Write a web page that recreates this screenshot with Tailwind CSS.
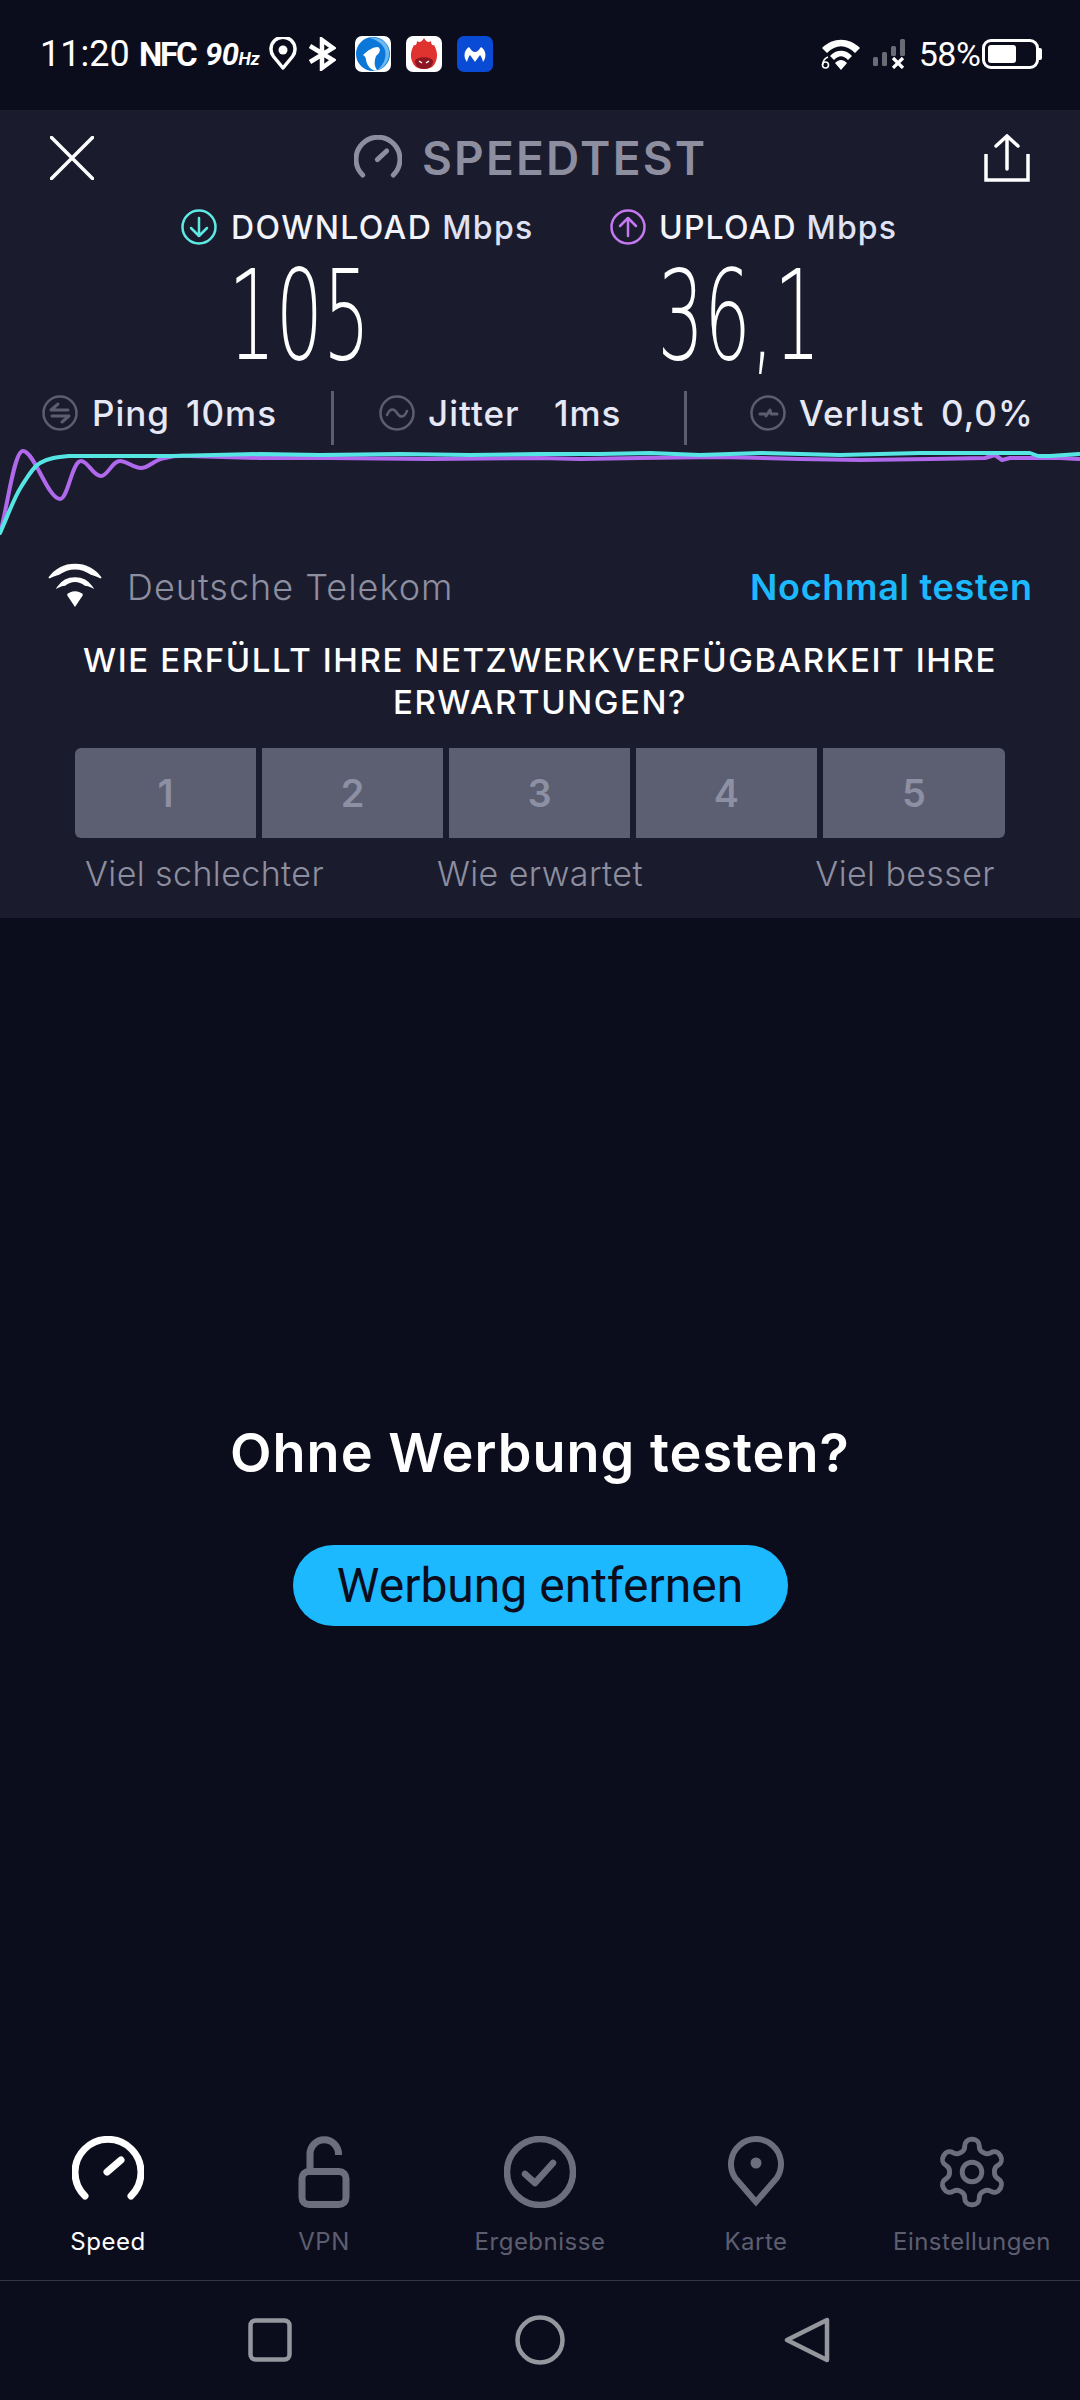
<!DOCTYPE html>
<html lang="en">
<head>
    <meta charset="UTF-8">
    <meta name="viewport" content="width=device-width, initial-scale=1.0">
    <title>Speedtest</title>
    <script src="https://cdn.jsdelivr.net/npm/@tailwindcss/browser@4"></script>
</head>
<body class="bg-[#0c0d1c] font-['Inter',sans-serif]">
<div class="w-[1080px] h-[2400px] flex flex-col overflow-hidden">

    <!-- status bar -->
    <div class="h-[110px] shrink-0 bg-[#0c0d1c] flex items-center text-white font-['Roboto',sans-serif] pb-[2px]">
        <span class="ml-[40px] w-[90px] text-[36px] leading-none">11:20</span>
        <span class="ml-[9px] w-[56px] text-[33px] font-bold leading-none tracking-[-2.2px]">NFC</span>
        <span class="ml-[10px] text-[31px] font-bold italic leading-none tracking-[-.5px]">90</span>
        <span class="text-[18px] font-bold italic leading-none mt-[10px]">Hz</span>
        <svg class="ml-[9px] w-[28px] h-[34px]" viewBox="0 0 28 34" fill="none"><path d="M14 31 L4.5 19.5 A12 12 0 1 1 23.5 19.5 Z" stroke="#fff" stroke-width="3.5" stroke-linejoin="round"/><circle cx="14" cy="13" r="4.5" fill="#fff"/></svg>
        <svg class="ml-[11px] w-[28px] h-[34px]" viewBox="0 0 28 34" fill="none"><path d="M2 9 L25 23 L14 31 V3 L25 11 L2 25" stroke="#fff" stroke-width="4.5" stroke-linejoin="miter"/></svg>
        <svg class="ml-[19px] w-[36px] h-[36px]" viewBox="0 0 36 36"><rect width="36" height="36" rx="7" fill="#fff"/><circle cx="18" cy="18" r="17" fill="#0b77d8"/><path d="M14 2 C22 0 33 5 34 15 C35 24 30 32 21 35 C28 30 32 22 30 14 C28 8 21 3 14 2Z" fill="#6db8ef"/><path d="M8 19 C13 14 18 11 23 11 C27 13 24 18 21 20 C19 26 19 31 23 35 C16 35 12 30 11 24 C11 22 10 20 8 19Z" fill="#fff"/></svg>
        <svg class="ml-[15px] w-[36px] h-[36px]" viewBox="0 0 36 36"><rect width="36" height="36" rx="7" fill="#fff"/><path d="M18 2 C20 6 23 7 25 5 C25 9 27 10 28 9 C31 14 32 20 30 25 C28 31 24 33 18 33 C12 33 8 31 6 25 C4 20 5 14 8 9 C9 10 11 9 11 5 C13 7 16 6 18 2Z" fill="#e0322f"/><path d="M9 25 C11 20 25 20 27 25 C27 30 23 33 18 33 C13 33 9 30 9 25Z" fill="#8c1622"/><path d="M13 25 L16 27 M23 25 L20 27" stroke="#fff" stroke-width="1.5"/></svg>
        <svg class="ml-[15px] w-[36px] h-[36px]" viewBox="0 0 36 36"><rect width="36" height="36" rx="7" fill="#0a4bd6"/><path d="M10 26 C6 21 7 14 12 11 C14 14 16 16 18 16 C20 16 22 14 24 11 C29 14 30 21 26 26 C25 22 24 20 23 19 C21 22 19 24 18 26 C17 24 15 22 13 19 C12 20 11 22 10 26Z" fill="#fff"/></svg>

        <svg class="ml-[328px] w-[40px] h-[32px]" viewBox="0 0 40 32" fill="none"><path d="M1 10 C12 -1 28 -1 39 10 L34 15 C25 6 15 6 6 15Z M9 18 C15 11 25 11 31 18 L27 22 C22 17 18 17 13 22Z" fill="#fff"/><path d="M20 32 L14 25 C18 21 22 21 26 25Z" fill="#fff"/><circle cx="4.5" cy="27" r="3" stroke="#fff" stroke-width="1.6"/><path d="M7 19 C4 20 2 23 1.5 27" stroke="#fff" stroke-width="1.6"/></svg>
        <svg class="ml-[12px] w-[32px] h-[30px]" viewBox="0 0 32 30"><rect x="0" y="18" width="5" height="9" rx="1.5" fill="#6a6b76"/><rect x="9" y="13" width="5" height="14" rx="1.5" fill="#6a6b76"/><rect x="18" y="7" width="5" height="10" rx="1.5" fill="#6a6b76"/><rect x="27" y="0" width="5" height="17" rx="1.5" fill="#6a6b76"/><path d="M20 19 L30 29 M30 19 L20 29" stroke="#fff" stroke-width="3.2"/></svg>
        <span class="ml-[14px] w-[60px] text-[34px] leading-none tracking-[-.5px]">58%</span>
        <div class="ml-[3px] w-[57px] h-[30px] rounded-[9px] border-[3px] border-white p-[3px]">
            <div class="w-[28px] h-[18px] bg-white rounded-[3px]"></div>
        </div>
        <div class="w-[3px] h-[12px] bg-white rounded-r-[2px]"></div>
    </div>

    <!-- result panel -->
    <div class="h-[808px] shrink-0 bg-[#1a1c2e] flex flex-col">
        <div class="h-[96px] shrink-0 flex items-center">
            <svg class="ml-[50px] w-[44px] h-[44px]" viewBox="0 0 44 44" fill="none" stroke="#fff" stroke-width="3.5" stroke-linecap="round"><path d="M1.5 1.5 L42.5 42.5 M42.5 1.5 L1.5 42.5"/></svg>
            <svg class="ml-[260px] w-[48px] h-[48px] mt-[2px]" viewBox="0 0 72 72" fill="none" stroke="#8d8e9f" stroke-width="7.5" stroke-linecap="round"><path d="M13 60 A33 33 0 1 1 59 60"/><path d="M35 37 L49 24"/></svg>
            <span class="ml-[20px] w-[290px] text-[46px] font-semibold text-[#8d8e9f] leading-none tracking-[2.2px]">SPEEDTEST</span>
            <svg class="ml-[272px] w-[46px] h-[48px]" viewBox="0 0 46 48" fill="none" stroke="#fff" stroke-width="3.5"><path d="M2 20 V46 H44 V20"/><path d="M23 35 V2 M12 12 L23 2 L34 12" stroke-linecap="round"/></svg>
        </div>

        <div class="h-[38px] shrink-0 flex items-center pt-[6px]">
            <svg class="ml-[181px] w-[36px] h-[36px] mt-[-3px]" viewBox="0 0 36 36" fill="none" stroke="#5fe9e3" stroke-width="2.5" stroke-linecap="round" stroke-linejoin="round"><circle cx="18" cy="18" r="16.5"/><path d="M18 9 V27 M10 19 L18 27 L26 19"/></svg>
            <span class="ml-[14px] w-[305px] text-[32px] font-medium text-[#f2f3fb] leading-none whitespace-nowrap tracking-[1.4px]">DOWNLOAD <span class="text-[#dfe2f5]">Mbps</span></span>
            <svg class="ml-[74px] w-[36px] h-[36px] mt-[-3px]" viewBox="0 0 36 36" fill="none" stroke="#c678f0" stroke-width="2.5" stroke-linecap="round" stroke-linejoin="round"><circle cx="18" cy="18" r="16.5"/><path d="M18 27 V9 M10 17 L18 9 L26 17"/></svg>
            <span class="ml-[13px] text-[32px] font-medium text-[#f2f3fb] leading-none whitespace-nowrap tracking-[1.2px]">UPLOAD <span class="text-[#dfe2f5]">Mbps</span></span>
        </div>

        <div class="h-[147px] shrink-0 flex text-white font-['DejaVu_Sans',sans-serif] font-extralight text-[124px] leading-[144px]">
            <div class="w-[598px] flex justify-center"><span class="inline-block scale-x-[.6]">105</span></div>
            <div class="w-[282px] flex justify-center"><span class="inline-block scale-x-[.59]">36,1</span></div>
        </div>

        <div class="h-[54px] shrink-0 flex items-center pb-[10px] text-[35px] font-medium text-[#e6e8f6] leading-none whitespace-nowrap tracking-[1px]">
            <svg class="ml-[42px] w-[36px] h-[36px]" viewBox="0 0 36 36" fill="none" stroke="#5c5e70" stroke-width="2.5" stroke-linecap="round"><circle cx="18" cy="18" r="16.5"/><path d="M9 15 H26 M9 15 L16 9 M27 21 H10 M27 21 L20 27" stroke-width="3"/></svg>
            <span class="ml-[14px] w-[94px]">Ping</span>
            <span class="w-[145px]">10ms</span>
            <div class="w-[3px] h-[54px] self-start bg-[#5c5e70]"></div>
            <svg class="ml-[45px] w-[36px] h-[36px]" viewBox="0 0 36 36" fill="none" stroke="#5c5e70" stroke-width="2.5" stroke-linecap="round"><circle cx="18" cy="18" r="16.5"/><path d="M8 20 C11 13 15 13 18 18 C21 23 25 23 28 16"/></svg>
            <span class="ml-[13px] w-[126px]">Jitter</span>
            <span class="w-[130px]">1ms</span>
            <div class="w-[3px] h-[54px] self-start bg-[#5c5e70]"></div>
            <svg class="ml-[63px] w-[36px] h-[36px]" viewBox="0 0 36 36" fill="none" stroke="#5c5e70" stroke-width="2.5" stroke-linecap="round" stroke-linejoin="round"><circle cx="18" cy="18" r="16.5"/><path d="M10 19 H15 M16 21 L20 15 L21 19 H27" stroke-width="3"/></svg>
            <span class="ml-[13px] w-[142px]">Verlust</span>
            <span>0,0%</span>
        </div>

        <svg class="w-[1080px] h-[100px] shrink-0" viewBox="0 445 1080 100" fill="none" stroke-width="4" stroke-linejoin="round" stroke-linecap="round">
            <path stroke="#b069ec" d="M0 533 C8 505 14 451 23 451 C34 451 48 499 60 499 C68 499 72 461 81 461 C88 461 93 476 101 476 C108 476 112 461 120 461 C127 461 133 468 141 468 C149 468 155 459 165 458 C172 456 178 455 190 456 L260 458 L330 458 L430 459 L540 458 L580 459 L640 458 L720 457 L800 459 L860 460 L930 459 L985 458 L995 455 L1002 460 L1010 458 L1060 458 L1079 459"/>
            <path stroke="#55e6e4" d="M0 533 C8 515 14 498 21 487 C28 476 33 467 40 463 C48 458 58 457 69 456 L172 456 L260 454 L320 455 L400 454 L470 455 L540 454 L600 454 L650 453 L700 455 L760 453 L840 455 L920 453 L1030 453 L1038 456 L1050 456 L1079 454"/>
        </svg>

        <div class="h-[83px] shrink-0 flex items-center">
            <svg class="ml-[48px] w-[54px] h-[44px] mb-[3px]" viewBox="0 0 54 44" fill="none"><path d="M1 15 C14 -3 40 -3 53 15 C50 13 46 12 43 11 C33 4 21 4 11 11 C8 12 4 13 1 15Z M10 24 C18 12 36 12 44 24 C42 23 39 22 37 22 C31 17 23 17 17 22 C15 22 12 23 10 24Z" fill="#fff" stroke="#fff" stroke-width="1.5"/><path d="M27 44 L19 32 C22 27 32 27 35 32Z" fill="#fff"/></svg>
            <span class="ml-[25px] w-[623px] text-[36px] font-light text-[#8d8e9f] leading-none tracking-[1px] whitespace-nowrap">Deutsche Telekom</span>
            <span class="text-[36px] font-semibold text-[#1cb9ff] leading-none whitespace-nowrap tracking-[.7px]">Nochmal testen</span>
        </div>

        <p class="h-[84px] shrink-0 text-center text-[33px] font-medium text-white leading-[42px] mt-[11px] tracking-[1.6px] whitespace-nowrap">WIE ERFÜLLT IHRE NETZWERKVERFÜGBARKEIT IHRE<br>ERWARTUNGEN?</p>

        <div class="mt-[25px] h-[90px] shrink-0 ml-[75px] w-[930px] flex gap-[6px] text-[38px] font-semibold text-[#8d8fa3]">
            <div class="w-[181px] bg-[#5c5e72] rounded-l-[6px] flex items-center justify-center">1</div>
            <div class="w-[181px] bg-[#5c5e72] flex items-center justify-center">2</div>
            <div class="w-[181px] bg-[#5c5e72] flex items-center justify-center">3</div>
            <div class="w-[181px] bg-[#5c5e72] flex items-center justify-center">4</div>
            <div class="w-[182px] bg-[#5c5e72] rounded-r-[6px] flex items-center justify-center">5</div>
        </div>

        <div class="h-[71px] shrink-0 px-[85px] grid grid-cols-3 items-center text-[34px] font-light text-[#8d8e9f] whitespace-nowrap tracking-[.4px]">
            <span>Viel schlechter</span>
            <span class="text-center">Wie erwartet</span>
            <span class="text-right">Viel besser</span>
        </div>
    </div>

    <!-- remove ads -->
    <div class="flex-1 flex flex-col items-center">
        <h2 class="mt-[500px] text-[54px] leading-[70px] font-semibold text-white whitespace-nowrap tracking-[1px]">Ohne Werbung testen?</h2>
        <div class="mt-[57px] w-[495px] h-[81px] rounded-full bg-[#1cb9ff] flex items-center justify-center font-['Roboto',sans-serif] text-[48px] text-[#0c0d1c] leading-none">Werbung entfernen</div>
    </div>

    <!-- tabs -->
    <div class="h-[144px] shrink-0 grid grid-cols-5 items-start text-[24px] text-[#5c5e70] text-center leading-none whitespace-nowrap tracking-[.5px]">
        <div class="flex flex-col items-center text-white">
            <svg class="w-[72px] h-[72px]" viewBox="0 0 72 72" fill="none" stroke="#fff" stroke-width="7" stroke-linecap="round"><path d="M13 60 A33 33 0 1 1 59 60"/><path d="M35 36 L49 24"/></svg>
            <span class="mt-[22px]">Speed</span>
        </div>
        <div class="flex flex-col items-center">
            <svg class="w-[72px] h-[72px]" viewBox="0 0 72 72" fill="none" stroke="#6c6e7e" stroke-width="7"><rect x="14" y="35.5" width="44" height="33" rx="7"/><path d="M22 34 V18 A14.25 14.25 0 0 1 50.5 18 V19"/></svg>
            <span class="mt-[22px]">VPN</span>
        </div>
        <div class="flex flex-col items-center">
            <svg class="w-[72px] h-[72px]" viewBox="0 0 72 72" fill="none" stroke="#6c6e7e" stroke-width="6.5" stroke-linecap="round" stroke-linejoin="round"><circle cx="36" cy="36" r="33"/><path d="M21 38 L31 47 L49 27"/></svg>
            <span class="mt-[22px]">Ergebnisse</span>
        </div>
        <div class="flex flex-col items-center">
            <svg class="w-[72px] h-[72px]" viewBox="0 0 72 72" fill="none" stroke="#6c6e7e" stroke-width="6"><path d="M36 66 L15 41.6 A25 25 0 1 1 57 41.6 Z"/><circle cx="36" cy="27" r="5.5" fill="#6c6e7e" stroke="none"/></svg>
            <span class="mt-[22px]">Karte</span>
        </div>
        <div class="flex flex-col items-center">
            <svg class="w-[72px] h-[72px]" viewBox="1 1 22 22" fill="none" stroke="#6c6e7e" stroke-width="1.5" stroke-linecap="round" stroke-linejoin="round"><path d="M12.22 2h-.44a2 2 0 0 0-2 2v.18a2 2 0 0 1-1 1.73l-.43.25a2 2 0 0 1-2 0l-.15-.08a2 2 0 0 0-2.73.73l-.22.38a2 2 0 0 0 .73 2.73l.15.1a2 2 0 0 1 1 1.72v.51a2 2 0 0 1-1 1.74l-.15.09a2 2 0 0 0-.73 2.73l.22.38a2 2 0 0 0 2.73.73l.15-.08a2 2 0 0 1 2 0l.43.25a2 2 0 0 1 1 1.73V20a2 2 0 0 0 2 2h.44a2 2 0 0 0 2-2v-.18a2 2 0 0 1 1-1.73l.43-.25a2 2 0 0 1 2 0l.15.08a2 2 0 0 0 2.73-.73l.22-.39a2 2 0 0 0-.73-2.73l-.15-.08a2 2 0 0 1-1-1.74v-.5a2 2 0 0 1 1-1.74l.15-.09a2 2 0 0 0 .73-2.73l-.22-.38a2 2 0 0 0-2.73-.73l-.15.08a2 2 0 0 1-2 0l-.43-.25a2 2 0 0 1-1-1.73V4a2 2 0 0 0-2-2z"/><circle cx="12" cy="12" r="3"/></svg>
            <span class="mt-[22px]">Einstellungen</span>
        </div>
    </div>

    <!-- android nav -->
    <div class="h-[120px] shrink-0 border-t border-[#33343f] flex items-center pb-[2px]">
        <svg class="ml-[248px] w-[44px] h-[44px]" viewBox="0 0 44 44" fill="none" stroke="#96979e" stroke-width="4.5"><rect x="2.5" y="2.5" width="39" height="39" rx="5"/></svg>
        <svg class="ml-[223px] w-[50px] h-[50px]" viewBox="0 0 50 50" fill="none" stroke="#96979e" stroke-width="4.5"><circle cx="25" cy="25" r="22.5"/></svg>
        <svg class="ml-[219px] w-[46px] h-[46px]" viewBox="0 0 46 46" fill="none" stroke="#96979e" stroke-width="4.5" stroke-linejoin="round"><path d="M3 23 L43 3 V43 Z"/></svg>
    </div>
</div>
</body>
</html>
